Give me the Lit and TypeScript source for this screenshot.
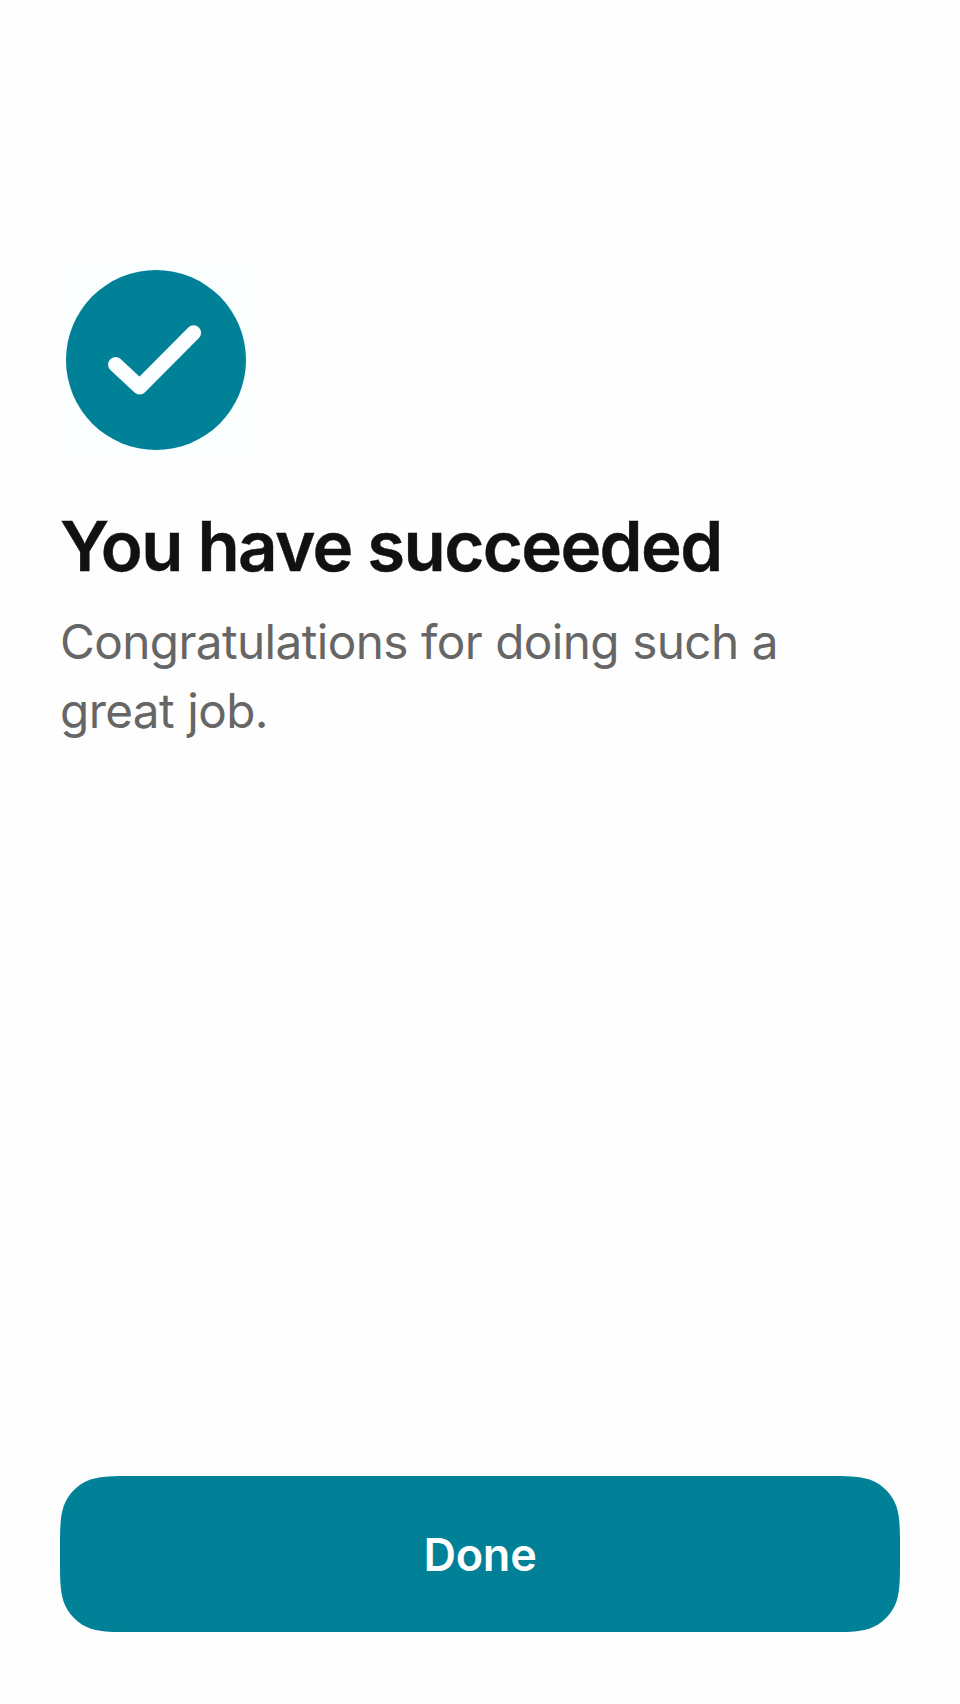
import { LitElement, html, css, svg } from "lit";
import { customElement } from "lit/decorators.js";

@customElement("success-icon")
class SuccessIcon extends LitElement {
  static styles = css`
    :host { display: block; width: 192px; height: 192px; background: #fafeff; }
    svg { display: block; }
    .disc { fill: #008198; }
    .check { fill: none; stroke: #fafeff; stroke-width: 15; stroke-linecap: round; stroke-linejoin: round; }
  `;
  render() {
    return html`<svg width="192" height="192" viewBox="0 0 192 192" aria-hidden="true">
      <circle class="disc" cx="96" cy="96" r="90"></circle>
      <path class="check" d="M55.5 100.5L79.7 123L133.6 68.8"></path>
    </svg>`;
  }
}

// Continuous-curvature corners for a w×h button.
const smoothRect = (w: number, h: number, r: number) => {
  const a = 1.52866 * r, b = 1.08849 * r, c = 0.86841 * r, d = 0.63149 * r;
  const e = 0.07491 * r, f = 0.37282 * r, g = 0.16906 * r;
  return [
    `M${a} 0L${w - a} 0`,
    `C${w - b} 0 ${w - c} 0 ${w - d} ${e}C${w - f} ${g} ${w - g} ${f} ${w - e} ${d}C${w} ${c} ${w} ${b} ${w} ${a}`,
    `L${w} ${h - a}`,
    `C${w} ${h - b} ${w} ${h - c} ${w - e} ${h - d}C${w - g} ${h - f} ${w - f} ${h - g} ${w - d} ${h - e}C${w - c} ${h} ${w - b} ${h} ${w - a} ${h}`,
    `L${a} ${h}`,
    `C${b} ${h} ${c} ${h} ${d} ${h - e}C${f} ${h - g} ${g} ${h - f} ${e} ${h - d}C0 ${h - c} 0 ${h - b} 0 ${h - a}`,
    `L0 ${a}`,
    `C0 ${b} 0 ${c} ${e} ${d}C${g} ${f} ${f} ${g} ${d} ${e}C${c} 0 ${b} 0 ${a} 0Z`,
  ].join("");
};

@customElement("app-root")
class AppRoot extends LitElement {
  static styles = css`
    :host {
      display: flex; flex-direction: column; box-sizing: border-box;
      height: 1704px; padding: 264px 60px 72px; background: #fefefe;
      font-family: Inter, "Liberation Sans", sans-serif;
    }
    h1 {
      margin: 48px 0 0; font-size: 69px; line-height: 84px; font-weight: 600;
      letter-spacing: -1.65px; color: #111; white-space: nowrap;
      -webkit-text-stroke: 0.4px #111;
    }
    p {
      margin: 20px 0 0; font-size: 47.7px; line-height: 69px; font-weight: 400;
      letter-spacing: -0.6px; word-spacing: 0.4px; color: #666;
    }
    button {
      display: grid; grid-template: 156px / 840px; place-items: center;
      margin-top: auto; padding: 0; border: 0; background: none;
      font: 600 45px/54px Inter, "Liberation Sans", sans-serif; color: #fff;
    }
    .shape, .label { grid-area: 1 / 1; }
    .label { padding-top: 2px; letter-spacing: -0.2px; }
    .shape { display: block; fill: #008198; }
  `;
  render() {
    return html`
      <success-icon></success-icon>
      <h1>You have succeeded</h1>
      <p>Congratulations for doing such a<br />great job.</p>
      <button>
        <svg class="shape" width="840" height="156" viewBox="0 0 840 156" aria-hidden="true">
          ${svg`<path d=${smoothRect(840, 156, 48)}></path>`}
        </svg>
        <span class="label">Done</span>
      </button>
    `;
  }
}
